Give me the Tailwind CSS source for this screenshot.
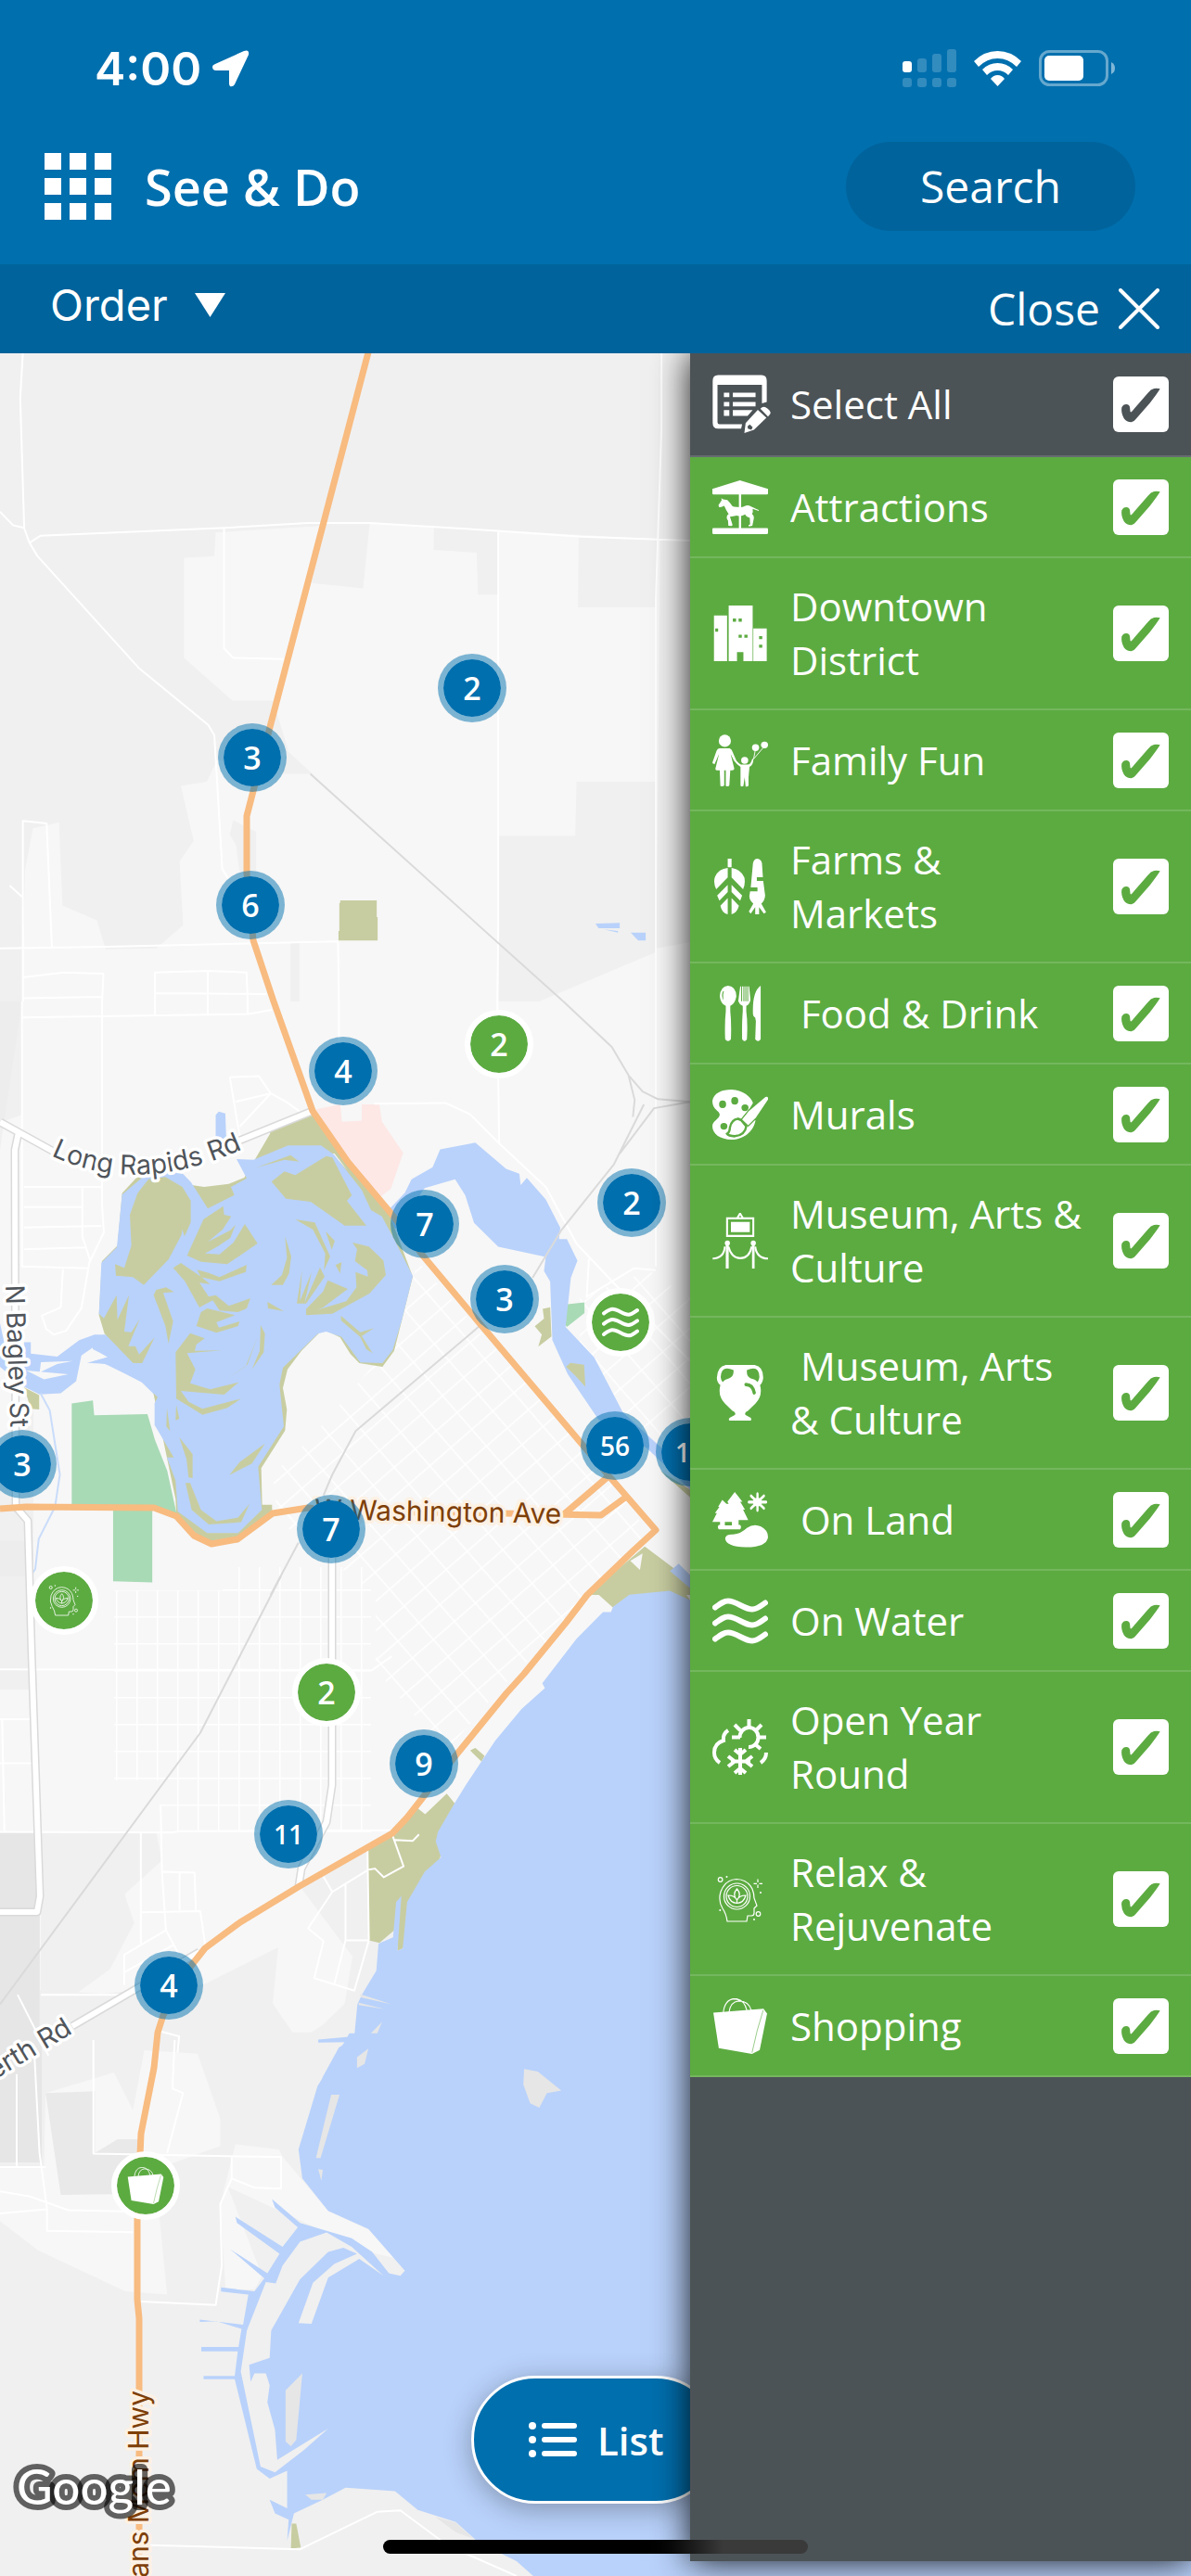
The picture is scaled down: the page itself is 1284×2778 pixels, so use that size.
<!DOCTYPE html>
<html lang="en">
<head>
    <meta charset="UTF-8">
    <meta name="viewport" content="width=device-width, initial-scale=1.0">
    <title>See &amp; Do</title>
    <script src="https://cdn.jsdelivr.net/npm/@tailwindcss/browser@4"></script>
</head>
<body class="flex min-h-screen flex-col bg-[#f0f0f0] font-['Open_Sans',sans-serif] text-white">

    <!-- icon sprite -->
    <svg class="hidden" aria-hidden="true">
        <symbol id="i-select" viewBox="70 72 174 162" preserveAspectRatio="none" overflow="visible">
            <path d="M71 85Q71 68 88 68H224Q240 68 240 85V146L225 150V96H86V205Q86 211 92 211H163L160 224H88Q71 224 71 207Z"/>
            <path d="M106 119h17v13h-17zM134 119h71v13h-71zM106 146h17v13h-17zM134 146h71v13h-71zM106 170h17v17h-17zM134 170H196L180 187H134Z"/>
            <path fill-rule="evenodd" d="M170 237L174 208L212 169L239 192L200 227ZM180 217L181 224L192 227L196 220L187 212Z"/>
            <path d="M220 166Q230 156 242 165Q256 175 250 182L244 189Z"/>
        </symbol>
        <symbol id="i-attractions" viewBox="70 370 174 162" preserveAspectRatio="none">
            <path d="M70 398L156 373L244 398V411Q244 414 240 414H74Q70 414 70 411ZM153 410h7v104h-7zM73 512H241Q244 512 244 515V526Q244 529 241 529H73Q70 529 70 526V515Q70 512 73 512Z"/>
            <path d="M89 445L99 431L98 425L104 428L117 430Q126 438 133 448Q140 451 150 450Q162 453 170 448Q180 443 190 448Q196 451 215 459V462L196 456Q198 465 194 471Q202 475 199 487L195 505L184 507L183 503L188 501L187 482Q176 480 172 472Q160 480 146 475Q134 477 125 479L133 502L131 506L120 505L119 490Q112 482 117 474L121 471Q113 460 107 447L98 450L91 451Z"/>
        </symbol>
        <symbol id="i-downtown" viewBox="70 741 174 162" preserveAspectRatio="none">
            <path fill-rule="evenodd" d="M75 770H116V903H75ZM121 741H196V903H167V877H147V903H121ZM198 808H240V903H198ZM79 808V817H88V808ZM134 779V788H144V779ZM152 779V788H162V779ZM152 826V835H162V826ZM170 826V835H180V826ZM216 830V839H226V830ZM216 855V864H226V855Z"/>
        </symbol>
        <symbol id="i-family" viewBox="70 1108 174 162" preserveAspectRatio="none">
            <ellipse cx="109" cy="1132" rx="19" ry="18"/>
            <path d="M92 1154H124Q131 1156 134 1166L145 1190Q156 1202 160 1201H180Q190 1201 194 1186L198 1183V1190Q196 1204 186 1208L183 1238V1262Q182 1266 174 1265L171 1238L167 1264Q158 1267 158 1262V1208Q148 1203 137 1189L127 1170L138 1211Q140 1218 132 1218H126L123 1262Q120 1267 112 1263V1218H107V1262Q102 1267 95 1263L93 1218H84Q78 1218 80 1211L91 1170L77 1200Q68 1200 71 1193L83 1161Q86 1154 92 1154Z"/>
            <ellipse cx="171" cy="1189" rx="11" ry="10"/>
            <ellipse cx="205" cy="1152" rx="11" ry="10"/>
            <ellipse cx="233" cy="1144" rx="11" ry="10"/>
            <path d="M204 1160L199 1185L229 1152" fill="none" stroke="currentColor" stroke-width="2.5"/>
        </symbol>
        <symbol id="i-farms" viewBox="70 -35 174 162" preserveAspectRatio="none">
            <path d="M118 -35H130V-10H118ZM118 -8V20L82 54Q72 35 78 18Q90 -6 118 -8ZM130 -8Q160 -4 170 20Q174 38 166 54L130 20ZM118 41V62L92 87L85 72ZM130 41L163 72L157 87L130 62ZM118 80V127Q100 124 95 102ZM130 80L153 102Q148 122 130 127Z"/>
            <path d="M197 -22Q200 -35 211 -35Q222 -34 225 -22L228 19H209V30H229L235 72Q234 86 223 96L238 121L231 125L216 106V127H204V106L190 125L184 119L198 96Q184 84 186 72L188 60H211V49H190Z"/>
        </symbol>
        <symbol id="i-food" viewBox="70 333 174 162" preserveAspectRatio="none">
            <path fill-rule="evenodd" d="M119 333Q144 335 145 364Q141 386 126 392V408Q130 440 128 489Q119 500 110 489Q108 440 112 408V392Q96 386 93 364Q95 335 119 333ZM104 348Q96 362 105 376Q102 360 106 350Z"/>
            <path d="M157 335H160V378H163V335H167V378H170V335H173V378H176V335H179V378H182V335H185L189 374Q187 387 176 392V408Q181 440 178 489Q171 500 163 489Q162 440 165 408V392Q154 387 151 378ZM221 333V489Q213 500 204 489L206 436L204 426Q198 424 197 417Q194 350 221 333Z"/>
        </symbol>
        <symbol id="i-murals" viewBox="70 627 174 162" preserveAspectRatio="none">
            <path fill-rule="evenodd" d="M70 668C74 645 100 635 130 635C165 636 190 655 197 674L170 716L205 725C198 760 165 781 130 781C95 781 70 765 70 742C70 725 92 722 93 708C92 695 70 695 70 668ZM91 678a11 11 0 1 0 22 0a11 11 0 1 0 -22 0ZM129 668a11 11 0 1 0 22 0a11 11 0 1 0 -22 0ZM161 688a11 10 0 1 0 22 0a11 10 0 1 0 -22 0ZM95 742a11 10 0 1 0 22 0a11 10 0 1 0 -22 0Z"/>
            <g stroke="#5cab41" stroke-width="7">
                <path d="M116 764Q124 760 125 745Q130 722 150 720L160 724L176 742Q172 768 140 771Q120 770 116 764Z"/>
                <path d="M163 722L184 698L236 657Q246 654 244 664L206 717L182 739Z"/>
            </g>
            <path d="M163 722L184 698L236 657Q246 654 244 664L206 717L182 739Z"/>
        </symbol>
        <symbol id="i-museum" viewBox="70 998 174 162" preserveAspectRatio="none">
            <path d="M116 1014H198V1065H116Z" fill="none" stroke="currentColor" stroke-width="6"/>
            <path d="M128 1024H187V1054H128ZM145 1012L154 998H159L168 1012H161L157 1005L152 1012ZM112 1090H121V1160H112ZM194 1090H202V1160H194Z"/>
            <circle cx="117" cy="1086" r="8"/>
            <circle cx="198" cy="1086" r="8"/>
            <path d="M71 1131Q107 1130 109 1096M120 1096Q130 1130 157 1130Q186 1130 193 1096M204 1096Q208 1130 244 1131" fill="none" stroke="currentColor" stroke-width="6"/>
        </symbol>
        <symbol id="i-vase" viewBox="70 1441 174 162" preserveAspectRatio="none">
            <path fill-rule="evenodd" d="M112 1441H202Q229 1445 229 1478Q228 1492 219 1500Q228 1530 205 1553L182 1574Q168 1580 174 1587L190 1595Q194 1603 188 1603H124Q119 1600 124 1595L140 1587Q146 1580 132 1574L109 1553Q86 1530 95 1500Q84 1492 84 1478Q86 1445 112 1441ZM136 1456Q98 1440 96 1476Q97 1486 102 1491Q108 1483 122 1480Q138 1474 136 1456ZM178 1456Q176 1474 190 1480Q206 1483 211 1491Q216 1486 217 1476Q216 1440 178 1456Z"/>
            <path d="M175 1498Q196 1498 201 1522" fill="none" stroke="#5cab41" stroke-width="10" stroke-linecap="round"/>
        </symbol>
        <symbol id="i-land" viewBox="70 231 174 127" preserveAspectRatio="none">
            <path fill-rule="evenodd" d="M140 231L164 253H157L172 271H166L182 295H152V306H157Q162 311 157 316H90Q84 311 90 306H94V299H70L84 279H78L92 265H88L101 249L114 258H121L117 253ZM109 299V307H131V299Z"/>
            <path d="M110 337Q112 327 135 328Q160 326 178 313Q200 302 222 310Q244 318 244 334Q240 357 174 357Q112 356 110 337Z"/>
            <path d="M211 235V273M184 254H238M191 240L231 268M231 240L191 268" fill="none" stroke="currentColor" stroke-width="7" stroke-linecap="round"/>
            <ellipse cx="211" cy="254" rx="14" ry="10"/>
        </symbol>
        <symbol id="i-water" viewBox="0 0 60 60">
            <g fill="none" stroke="currentColor" stroke-width="6" stroke-linecap="round">
                <path d="M3 15.500C9 11 12 8.500 17 8.500C26 8.500 34 17.500 43 17.500C49 17.500 53 13 57 10.500"/>
                <path d="M3 32.500C9 28 12 25.500 17 25.500C26 25.500 34 34.500 43 34.500C49 34.500 53 30 57 27.500"/>
                <path d="M3 49.500C9 45 12 42.500 17 42.500C26 42.500 34 51.500 43 51.500C49 51.500 53 47 57 44.500"/>
            </g>
        </symbol>
        <symbol id="i-open" viewBox="0 0 60 60">
            <g fill="none" stroke="currentColor" stroke-width="4">
                <path d="M17 12Q11 16 12 23Q2 26 2 36Q2 43 8 47M58 36Q58 43 52 47"/>
                <path d="M29.500 20A10 10.500 0 1 1 39 30M39.500 0V8M21 19.500H30M24 6L30 12M53 6L47 12M49 19.500H58M46 27L52 32"/>
                <path d="M30 31V60M20 45.500H41M24 33L30 38L36 33M24 58L30 53L36 58M17 40L24 45.500L17 51M43 40L36 45.500L43 51"/>
            </g>
        </symbol>
        <symbol id="i-relax" viewBox="0 0 60 60">
            <g fill="none" stroke="currentColor" stroke-width="1.200">
                <path d="M16 54Q15 46 11 40Q6 32 9 22Q14 9 26 8.500Q38 9 43 19Q45 24 45 29L48 37L45 40V45Q45 48 42 48H38L37 54Z"/>
                <circle cx="26.500" cy="27" r="14"/>
                <circle cx="26.500" cy="27" r="11.500"/>
                <path d="M17 26Q19 34 26.500 34.500Q34 34 36 26Q29 26 26.500 31Q24 26 17 26ZM26.500 31Q21 25 26.500 19Q32 25 26.500 31M26.500 31V35"/>
                <circle cx="8.600" cy="9" r="2.300"/>
                <circle cx="49.500" cy="46" r="2.300"/>
                <path d="M49 8.500V12M49 14.500V18M44.500 13.300H48M50.500 13.300H54"/>
            </g>
            <circle cx="15.500" cy="6" r="1"/><circle cx="52" cy="23" r="1"/><circle cx="8.300" cy="42" r="1"/><circle cx="45" cy="52" r="1"/>
        </symbol>
        <symbol id="i-bag" viewBox="70 1388 174 127" preserveAspectRatio="none">
            <path d="M73 1421L230 1412L241 1423L218 1506L194 1515L90 1502Z"/>
            <path d="M104 1422Q108 1390 140 1389Q170 1390 178 1416M122 1420Q126 1396 152 1394Q184 1394 192 1416" fill="none" stroke="currentColor" stroke-width="3"/>
            <path d="M229 1415L210 1462L194 1512" fill="none" stroke="#5cab41" stroke-width="1.500"/>
        </symbol>
        <symbol id="i-check" viewBox="1324 370 174 162" preserveAspectRatio="none">
            <path d="M1351 460Q1356 450 1367 451Q1377 452 1377 465Q1377 473 1380 474Q1384 472 1390 464L1433 418Q1442 407 1452 405Q1462 403 1471 406Q1462 420 1440 446L1395 494Q1388 503 1381 503Q1366 503 1358 492Q1348 476 1351 460Z"/>
        </symbol>
    </svg>

    <header class="bg-[#006fae]">
        <div class="flex h-[117px] items-center justify-between pt-[30px] pr-[82px] pl-[102px]">
            <div class="flex items-center gap-3">
                <span class="font-['Inter',sans-serif] text-[50px] leading-none font-semibold">4:00</span>
                <svg class="size-10 fill-white" viewBox="0 0 40 40"><path d="M34 1Q40-1 39 5L24 37Q22 40 19 39Q18 38 18 36V22H4Q0 22 0 18Q0 16 3 15Z"/></svg>
            </div>
            <div class="flex items-center gap-[19px]">
                <svg class="h-[41px] w-[58px] fill-white" viewBox="0 0 58 41">
                    <rect y="13" width="10" height="12" rx="3"/>
                    <g opacity=".2"><rect x="16" y="10" width="10" height="15" rx="3"/><rect x="32" y="5" width="10" height="20" rx="3"/><rect x="48" width="10" height="25" rx="3"/><rect y="31" width="10" height="10" rx="3"/><rect x="16" y="31" width="10" height="10" rx="3"/><rect x="32" y="31" width="10" height="10" rx="3"/><rect x="48" y="31" width="10" height="10" rx="3"/></g>
                </svg>
                <svg class="h-[38px] w-[51px] fill-white" viewBox="0 0 51 38">
                    <path d="M0 11Q11 0 25.500 0Q40 0 51 11L46 17Q37 8 25.500 8Q14 8 5 17ZM9 20Q16 13 25.500 13Q35 13 42 20L37 26Q32 21 25.500 21Q19 21 14 26ZM18 30Q21 26 25.500 26Q30 26 33 30L25.500 38Z"/>
                </svg>
                <svg class="h-[39px] w-[82px]" viewBox="0 0 82 39">
                    <rect x="1.500" y="1.500" width="72" height="36" rx="10" fill="none" stroke="#fff" stroke-opacity=".4" stroke-width="3"/>
                    <rect x="6" y="6" width="42" height="27" rx="5" fill="#fff"/>
                    <path d="M78 13Q82 15 82 19.500Q82 24 78 26Z" fill="#fff" fill-opacity=".5"/>
                </svg>
            </div>
        </div>
        <nav class="flex items-center justify-between py-9 pr-[60px] pl-12">
            <div class="flex items-center gap-9">
                <button type="button" aria-label="Menu" class="grid size-[72px] grid-cols-3 gap-[9px]">
                    <span class="size-[18px] bg-white"></span><span class="size-[18px] bg-white"></span><span class="size-[18px] bg-white"></span>
                    <span class="size-[18px] bg-white"></span><span class="size-[18px] bg-white"></span><span class="size-[18px] bg-white"></span>
                    <span class="size-[18px] bg-white"></span><span class="size-[18px] bg-white"></span><span class="size-[18px] bg-white"></span>
                </button>
                <h1 class="text-[54px] leading-[72px] font-semibold">See &amp; Do</h1>
            </div>
            <button type="button" class="h-24 w-[312px] rounded-full bg-[#00639b] text-5xl">Search</button>
        </nav>
        <div class="flex h-24 items-center justify-between bg-[#00639b] pr-[34px] pl-[54px]">
            <div class="flex items-center gap-1 pb-2">
                <select aria-label="Order" class="w-[152px] appearance-none bg-transparent font-['Inter',sans-serif] text-[47px] leading-[60px]">
                    <option>Order</option>
                </select>
                <svg class="h-[26px] w-[33px] fill-white" viewBox="0 0 33 26"><path d="M0 0H33L16.500 26Z"/></svg>
            </div>
            <button type="button" class="flex items-center gap-5 text-5xl leading-[64px]">
                Close
                <svg class="size-11 stroke-white stroke-[4]" viewBox="0 0 44 44"><path d="M2 2L42 42M42 2L2 42" stroke-linecap="round"/></svg>
            </button>
        </div>
    </header>

    <main class="relative flex flex-1 justify-end overflow-hidden">
        <div class="absolute inset-0">
            <svg class="h-full w-full [&_path]:[vector-effect:non-scaling-stroke]" viewBox="0 381 1284 2397" preserveAspectRatio="xMinYMin slice" stroke-linejoin="round">
                <defs>
                    <pattern id="diag" width="24" height="30" patternUnits="userSpaceOnUse" patternTransform="translate(8 4) rotate(49)"><path d="M0 0H24M0 0V30" fill="none" stroke="#fff" stroke-width="3"/></pattern>
                    <pattern id="grid" width="22" height="29" patternUnits="userSpaceOnUse" patternTransform="translate(15 3)"><path d="M0 0H22M0 0V29" fill="none" stroke="#fff" stroke-width="3"/></pattern>
                </defs>
                <rect y="381" width="1284" height="2397" fill="#f0f0f0"/>
                <path fill="#f7f7f7" d="M24 1079H760V1976H423L323 2034L380 2110L370 2170L335 2192L314 2192L294 2160L300 2100L220 2140L110 2150L43 2146V1976H0V1822L36 1822V1500L0 1560V1240Z"/>

                <!-- street blocks -->
                <path fill="url(#diag)" d="M294 1590L337 1549L430 1440L450 1360L655 1590L700 1655L640 1720L540 1820L480 1890L405 1800V1720L300 1640Z"/>
                <path fill="url(#diag)" d="M625 1400L700 1370L744 1400V1620L690 1560L625 1470Z"/>
                <path fill="url(#grid)" d="M123 1715H240V1690H400V1976H172V1920H123Z"/>

                <!-- north -->
                <g transform="translate(0 380) scale(.4745 .4464)">
                    <path fill="#f7f7f7" d="M490 435L840 412L1500 452L1490 1568H52V1440L240 1442L355 1440L416 1384L408 1230L440 1180L411 1047L470 1037L493 985L575 1000L655 960L620 841H528L418 738V497L487 492ZM1490 1440L1568 1425V1568H1490ZM75 1150L134 1136L142 1336L220 1372L240 1442H52L57 1250Z"/>
                    <path fill="#f0f0f0" d="M735 415L840 412L825 570L708 557ZM986 422L1132 431V585H1086L1083 484L985 477ZM1315 445L1495 452L1488 616H1313ZM1310 1037H1488V1450L1225 1568H1133V1168H1307ZM650 960L710 1018H640ZM530 1130L582 1158V1260H545L536 1190L522 1165ZM660 1425H680V1568H660Z"/>
                    <path fill="#c8cda1" d="M773 1324H856V1364H858V1421H769V1398H771V1330H773Z"/>
                    <path fill="#b9d2fb" d="M1353 1380L1408 1378V1391H1360ZM1372 1394L1404 1398V1402ZM1433 1402H1467V1421H1450Z"/>
                    <path fill="none" stroke="#fff" stroke-width="2" d="M52 0L46 110L55 425L67 460L85 492L315 762L473 900L487 925L505 1248L518 1270M0 385L30 418L55 424M67 460L92 443L510 424L700 412H840L1130 431L1320 445L1568 455M1503 0V180L1490 600V1568M509 425V715L530 738L645 741M1132 431V1400L1130 1568M0 1440L240 1436L768 1423L770 1568M52 1568V1132L106 1138L118 1440M22 1288L50 1315M52 1510L145 1498L235 1501L232 1568M52 1560L232 1557M352 1568V1498L472 1494L560 1498L563 1568M472 1494V1568M352 1548L605 1550"/>
                    <path fill="none" stroke="#dadada" stroke-width="2" d="M705 1018L1130 1425L1280 1568"/>
                </g>

                <!-- town -->
                <g transform="translate(0 1080) scale(.4745 .4082)">
                    <path fill="#fde8e6" d="M718 285L773 272L777 318L822 315V272H862L868 318L916 400L888 495L862 518L780 400Z"/>
                    <path fill="#e9e9e9" opacity=".5" d="M0 0H52L48 300L0 320ZM0 1425H60V1568H0Z"/>
                    <path fill="#c8cda1" d="M613 345L705 293L890 560L868 565L760 402H632Z"/>
                    <path fill="#a8dab5" d="M163 1062L211 1054L214 1093L335 1090L352 1158L380 1240L402 1358L350 1335L163 1332ZM257 1340H346V1535L257 1532Z"/>
                    <path fill="#a8dab5" d="M1252 805L1328 795V823L1288 860Z"/>
                    <path fill="#b9d2fb" d="M490 300L497 291L512 296L514 362L490 366ZM885 548L920 505L935 470L983 438L1000 391L1080 373L1150 442L1180 455L1183 485L1197 466L1240 523L1273 598L1270 628H1288L1312 685L1297 730L1285 860L1350 940L1415 1085L1568 1250V1290L1470 1180L1360 1105L1290 985L1255 895L1250 740L1236 712L1240 675L1132 648L1077 585L1057 512L1034 470L965 493L900 600L885 590Z"/>
                    <path fill="#c8cda1" d="M1233 812L1250 808L1253 885L1223 912L1231 880L1215 858L1236 838ZM1286 965L1296 955L1327 960L1330 1018L1308 990ZM55 1020L89 1040V1078L70 1076Z"/>
                    <path fill="#b9d2fb" d="M0 850L15 930L55 935V900H70V930L130 938L180 895L215 880L245 882L330 950L360 1050L320 1003L238 957L198 955L245 940L210 915L185 935L173 1003L138 1035L90 1038L55 1018L0 965Z"/>
                    <path fill="#f7f7f7" d="M93 953L90 980L130 958L165 950ZM60 975L155 985L100 998Z"/>
                    <path fill="none" stroke="#fff" stroke-width="2" d="M50 42L565 33L618 22M232 0V540L236 610L203 690L185 810L150 870L122 880L105 865L95 830L138 808L143 707M50 0V700L203 705M55 490H230M55 543H187M55 597L230 593M55 655L195 650M187 490V620L205 685M352 0V38M472 0V38M563 0V32M770 0V130M1130 0L1134 375M1490 0V700M522 200L588 197L615 243L545 330M535 265L615 243L650 265L680 290M522 200L545 358M850 270L1012 268L1068 298L1134 375L1240 490L1310 640L1440 800L1568 950M1338 680L1333 780L1440 705L1490 710"/>
                    <path fill="none" stroke="#dadada" stroke-width="2" d="M1280 0L1390 120L1428 195L1460 238L1495 258L1568 265M1428 195L1442 260L1438 305M1568 265L1486 282L1445 345L1408 402M1463 272L1410 395L1395 430L1275 605L1210 730M1090 857L808 1135L755 1250L735 1305M678 1430L615 1568"/>
                    <path fill="none" stroke="#c9dcfa" stroke-width="2" d="M92 1035L113 1080L136 1250L125 1335L88 1420L80 1500L40 1568"/>
                    <path fill="#c8cda1" d="M1465 1440L1568 1530V1568H1335ZM1500 1240L1568 1290V1310Z"/>
                    <path fill="#b9d2fb" d="M1522 1505L1542 1485L1568 1515V1550Z"/>
                    <path fill="#f7f7f7" d="M1432 1478L1460 1458L1454 1502Z"/>
                </g>

                <!-- wildlife sanctuary -->
                <g transform="translate(100 1210) scale(.3333)">
                    <path fill="#c8cda1" d="M148 173L185 180L325 205L360 210L440 200L490 180L575 35L633 85L740 76L790 120L960 300L1035 500L975 740L937 792L862 780L833 750L800 697L745 670L675 740L630 800L615 860L628 930L622 998L545 1120L548 1238H580V1262L470 1350L385 1365L330 1340L270 1270L268 1220L180 800L160 780H130L38 685L20 625L30 450L80 400L95 230Z"/>
                    <path fill="#b9d2fb" d="M95 235L160 180L190 175L235 160L292 168L318 195L372 280L458 236L447 210L498 182L465 120L520 122L632 76H738L780 105L870 220L900 285L935 305L970 370L1035 498L1000 640L970 738L937 780L865 778L805 695L755 678L728 685L615 795L604 850L618 985L535 1115L547 1255L470 1330H370L275 1260L268 1160L240 1085L262 1085L200 980V910L210 890L160 843L50 785L0 775L50 760L0 735V690L40 688L130 780H160L200 697L150 752L138 725L115 725L153 635L125 680L102 678L117 560L80 640L77 560L36 635L20 620L28 455L78 405Z"/>
                    <path fill="#c8cda1" d="M145 230L180 185L235 178L290 210L317 255V325L297 370L290 350L285 310L195 347L262 295L245 275L172 263L235 238L275 243L273 275L295 305L287 365L245 445L165 527L130 502L75 497L72 460L102 472L125 400L120 300Z"/>
                    <path fill="#c8cda1" d="M305 432L358 315L422 272L425 300L448 305L420 348L372 388L445 350L462 332L445 375L405 402L363 425L410 428L455 390L492 330L533 393L435 460L350 452ZM260 472L285 456L350 500L380 525L345 520L375 565L398 560L440 595L510 570L498 603L470 615L410 610L388 577L345 600L298 515ZM337 478L375 488L410 502L498 462L495 485L410 515L350 502ZM197 560L205 543L237 535L263 550L228 553L260 645L245 717L235 660ZM335 660L350 615L370 603L460 625L400 648L408 665L475 645L470 660L400 682ZM315 683L362 700L335 720L330 740L420 739L305 748L332 800L315 845L380 865L472 842L425 882L285 870L310 905L355 928L480 895L435 925L355 947L270 895L268 745ZM543 657L557 685L553 745L515 800L540 740ZM533 695L500 785L435 830L495 790ZM528 148L640 107L668 128L620 122ZM578 193L620 160L655 172L755 110L775 115L838 237L822 255L885 335H815L705 258L625 248ZM655 315L718 325L768 435L748 480L752 425L712 348ZM753 353L783 385L773 413ZM840 390L893 403L940 448L948 495L895 555L775 620L690 625V605L745 548L760 512L825 540L745 600L725 608L820 580L853 535L850 485L890 500L888 480L848 450L855 412ZM622 370L642 435L635 490L615 527H577L612 495L628 440ZM677 478L660 587H690L750 500L735 470L685 585L708 485L670 580ZM785 463L805 453L800 490ZM565 582L618 612L567 603ZM803 627L865 680L910 667L870 692L905 748L885 735L865 695L803 642ZM442 1142L475 1100L557 1040L515 1105ZM280 1020L323 1075V1152L310 1150L303 1090ZM300 1168H315L350 1255L400 1292L470 1280L507 1235L480 1295L375 1302L320 1255ZM240 925L250 1000L238 985ZM270 915L280 960L268 965Z"/>
                </g>

                <!-- south shore -->
                <g transform="translate(0 1700) scale(.4745 .3444)">
                    <path fill="#e6e6e6" d="M0 803H90V1568H0Z"/>
                    <path fill="#f0f0f0" d="M95 803H355L368 890L283 995L305 1085L250 1230L175 1305L92 1295ZM0 0H60V290H0ZM455 1400L555 1390L620 1340L665 1428H715L790 1330L770 1450L733 1568H470L440 1450Z"/>
                    <path fill="#c8cda1" d="M1350 45L1385 0H1530L1568 75L1430 60L1393 98ZM1068 545L1080 537L1101 562L1094 580ZM892 803L948 725L966 745L1015 680L1034 712L1000 880L915 1165L903 1172V1100L862 1148L838 1140L835 855Z"/>
                    <path fill="#b9d2fb" d="M1568 75L1522 45L1430 57L1393 95L1388 112H1370L1310 195L1232 335L1238 350L1185 415L1125 515L1060 650L1033 710L995 800L990 830L1002 880L965 925L925 1020L915 1165L903 1172L912 1000L900 1020L893 1130L860 1150L855 1235L822 1310L812 1340L805 1440L723 1450V1460L790 1458L770 1475L733 1568V1590H1600V75Z"/>
                    <path fill="#e6e6e6" d="M818 1308L890 1340L820 1318ZM815 1335L875 1355L815 1342ZM805 1442L838 1437L868 1395L855 1438ZM810 1508L838 1480L822 1535L810 1542ZM1195 1545L1215 1548L1238 1568H1195Z"/>
                    <path fill="none" stroke="#fff" stroke-width="2" d="M0 291L845 294L890 250M0 800L390 802L410 798L892 795M320 803V1150M365 718L368 925L377 1108L405 1180M370 925L442 928L445 1048M408 925V1045M322 1052L455 1048L467 1160M377 1108L282 1185V1280M282 1240L395 1153M93 1310H300M40 1310L110 1500M835 855L838 1140M835 920L755 988L700 1102L735 1142L714 1258L805 1297L838 1140M785 965V1140L760 1275M785 1140H838M735 940L755 988M892 812L917 908L872 942L852 915L838 918M897 825L938 828L952 808M365 1425L407 1440L398 1568M0 447H68M0 585H75M5 447L10 800"/>
                    <path fill="none" stroke="#dadada" stroke-width="2" d="M638 0L455 490L0 1340"/>
                </g>
                <g transform="translate(0 2200) scale(.8189 .3686)">
                    <path fill="#e6e6e6" d="M0 0H55V358H0Z"/>
                    <path fill="#f7f7f7" d="M60 155L150 95L175 205L190 30L260 40L290 230V310L215 370L210 520L220 745L165 735L50 615L0 530V375H58ZM310 305L367 320L372 341L398 410L432 500L485 555L525 640L485 620L300 430L345 690L335 730H297L290 480Z"/>
                    <path fill="#e9e9e9" d="M60 155L125 150V330L155 290H185V450L80 453Z"/>
                    <path fill="#b9d2fb" d="M455 0L418 135L393 320L398 405L432 500L485 553L533 675L527 690L512 682L490 620L463 580L395 535L358 465L362 490L392 548L372 605L310 517L312 535L368 625L352 682L303 612L348 697L335 735L291 724V736L327 745L320 833L263 818V825L285 823L318 845L314 898H265V911H313L309 983H268V992H309L338 1255L355 1283L378 1260V1370L355 1345L362 1385L380 1403L378 1465L387 1385L425 1345L455 1310L520 1320L550 1375L600 1410L630 1470L680 1525L702 1568H1568V-20H460Z"/>
                    <path fill="#f0f0f0" d="M430 563L395 590L372 660L363 712L350 708L325 850L317 970L343 1248L362 1265L400 1200L432 1137L365 1228L362 1140L352 1060L355 1010L350 975L335 975L330 1000L328 950L355 930L357 850L395 700L432 620L452 608L470 625L440 655L412 710L393 828L410 830L432 695L473 640L505 690L463 605Z"/>
                    <path fill="#e6e6e6" d="M690 85L708 92L739 148L720 155L710 198L698 185L689 130ZM470 50L485 25L480 70L470 82ZM436 160H447L422 345H416ZM419 378L425 380L423 412ZM376 1025L398 975L390 1170L383 1188L376 1175ZM402 1330L430 1325L425 1345H410ZM573 1395L600 1412L624 1460L600 1440Z"/>
                    <path fill="#c8cda1" d="M384 1415H390L396 1485L383 1488Z"/>
                    <path fill="none" stroke="#fff" stroke-width="2" d="M0 372H60M123 0V332L300 340L370 342V435L335 432L305 405L290 480L292 660L284 775L186 765M0 443L40 458L90 498L175 502M0 507L62 495V558L175 562M230 0L227 142L241 155L220 330M305 340V405M45 30L52 330L62 495M22 100V370M197 1478L395 1490L497 1380L527 1376L590 1480L680 1568"/>
                </g>

                <!-- roads -->
                <g fill="none">
                    <path stroke="#dadada" stroke-width="9" d="M0 1210L20 1221L58 1242M20 1221L16 1240L17 1625L30 1640L34 1780L43 2045L40 2062L0 2062M258 1230L337 1198M358 1680V1925L352 1965L325 2015L322 2034M78 2185L215 2105"/>
                    <path stroke="#fff" stroke-width="6" d="M0 1210L20 1221L58 1242M20 1221L16 1240L17 1625L30 1640L34 1780L43 2045L40 2062L0 2062M258 1230L337 1198M358 1680V1925L352 1965L325 2015L322 2034M78 2185L215 2105"/>
                    <path stroke="#f8bb80" stroke-width="7" d="M397 380L290 788L273 853L266 880V942L273 1014L295 1080L337 1198L375 1253L422 1309L455 1353L517 1427L655 1590L707 1650L683 1672L633 1720L610 1750L565 1805L546 1826L489 1896L439 1960L423 1977L323 2034L259 2073L221 2101L206 2120L176 2173L170 2192L166 2230L152 2301L148 2392V2480L150 2500V2778M0 1627L28 1625L166 1626L190 1635L209 1656L228 1665L256 1660L294 1632L332 1626L380 1630L541 1632L648 1634L674 1615M608 1633L656 1592"/>
                </g>

                <!-- labels -->
                <path id="long-rapids" d="M55 1246Q150 1292 268 1236" fill="none"/>
                <g font-family="Inter, sans-serif" font-size="29" fill="#50555b" stroke="#fff" stroke-width="7" paint-order="stroke">
                    <text><textPath href="#long-rapids">Long Rapids Rd</textPath></text>
                    <text font-size="28" transform="translate(6 1386) rotate(88)">N Bagley St</text>
                    <text text-anchor="end" transform="translate(79 2192) rotate(-31)">erth Rd</text>
                    <g font-size="30" fill="#7e3f08" stroke="#fdf1e4">
                        <text text-anchor="end" transform="translate(605 1643) rotate(1)">W Washington Ave</text>
                        <text text-anchor="end" transform="translate(160 2578) rotate(-90)">ans Mem Hwy</text>
                    </g>
                </g>
                <text x="18" y="2701" font-family="Lato, sans-serif" font-size="53" font-weight="500" fill="#fff" stroke="#000" stroke-opacity=".6" stroke-width="12" paint-order="stroke">Google</text>
            </svg>
            <div id="pins"></div>
            <button type="button" class="absolute bottom-[78px] left-1/2 flex h-[138px] w-[268px] -translate-x-1/2 items-center gap-[22px] rounded-full border-[3px] border-white bg-[#006fae] pl-[59px] text-[42px] font-semibold shadow-[0_6px_30px_rgba(0,0,0,0.3)]">
                <svg class="h-[38px] w-[52px] fill-white" viewBox="0 0 52 38"><circle cx="4" cy="4" r="4"/><circle cx="4" cy="19" r="4"/><circle cx="4" cy="34" r="4"/><rect x="14" y="1" width="38" height="6" rx="3"/><rect x="14" y="16" width="38" height="6" rx="3"/><rect x="14" y="31" width="38" height="6" rx="3"/></svg>
                List
            </button>
        </div>

        <aside class="relative mb-4 w-[540px] bg-[#4c5356] shadow-[0_0_36px_rgba(0,0,0,0.9)]">
            <ul id="filters"></ul>
        </aside>

        <div class="absolute bottom-6 left-1/2 h-[15px] w-[458px] -translate-x-1/2 rounded-full bg-linear-to-r from-black from-60% to-[#3a3a3a] to-80%"></div>
    </main>

    <script>
        const filters = [
            ['select', 'Select All'],
            ['attractions', 'Attractions'],
            ['downtown', 'Downtown District'],
            ['family', 'Family Fun'],
            ['farms', 'Farms &amp; Markets'],
            ['food', '&nbsp;Food &amp; Drink'],
            ['murals', 'Murals'],
            ['museum', 'Museum, Arts &amp; Culture'],
            ['vase', '&nbsp;Museum, Arts &amp; Culture'],
            ['land', '&nbsp;On Land'],
            ['water', 'On Water'],
            ['open', 'Open Year Round'],
            ['relax', 'Relax &amp; Rejuvenate'],
            ['bag', 'Shopping'],
        ];

        document.getElementById('filters').innerHTML = filters.map(([icon, label], i) => {
            const color = i === 0 ? 'bg-[#4c5356] text-[#4c5356]' : 'bg-[#5cab41] text-[#5cab41]';
            const height = i === 0 ? 'min-h-[110px]' : 'min-h-[107px]';
            return `
            <li class="${color} border-b-2 border-white/15">
                <label class="flex ${height} items-center gap-6 px-6 py-[23px]">
                    <svg class="size-[60px] shrink-0 overflow-visible fill-white text-white"><use href="#i-${icon}"/></svg>
                    <span class="flex-1 text-[42px] leading-[58px] text-white">${label}</span>
                    <span class="grid shrink-0">
                        <input type="checkbox" checked class="peer col-start-1 row-start-1 size-[60px] appearance-none rounded-md bg-white">
                        <svg class="pointer-events-none invisible col-start-1 row-start-1 size-[60px] fill-current peer-checked:visible"><use href="#i-check"/></svg>
                    </span>
                </label>
            </li>`;
        }).join('');

        // x, y of the pin centre on the map, then its count or its icon
        const pins = [
            [509, 361, 2], [272, 436, 3], [270, 595, 6], [370, 774, 4],
            [538, 745, 2, 'green'], [681, 916, 2], [458, 939, 7], [544, 1020, 3],
            [669, 1045, 'water', 'icon'], [744, 1185, 11], [663, 1178, 56], [24, 1198, 3],
            [357, 1268, 7], [69, 1345, 'relax', 'icon'], [352, 1444, 2, 'green'],
            [457, 1521, 9], [311, 1597, 11], [182, 1760, 4], [157, 1976, 'bag', 'icon'],
        ];

        document.getElementById('pins').innerHTML = pins.map(([x, y, value, kind]) => {
            const color = kind ? 'border-white bg-[#5cab41]' : 'border-[#006fae]/50 bg-[#006fae]';
            const size = value > 9 ? 'text-[28px]' : 'text-[34px]';
            const body = kind === 'icon'
                ? `<svg class="size-10 fill-white text-white"><use href="#i-${value}"/></svg>`
                : value;
            return `<button type="button" aria-label="${value}" class="absolute flex size-[74px] -translate-x-1/2 -translate-y-1/2 items-center justify-center rounded-full border-[6px] bg-clip-padding font-semibold ${size} ${color}" style="left:${x}px;top:${y}px">${body}</button>`;
        }).join('');
    </script>
</body>
</html>
